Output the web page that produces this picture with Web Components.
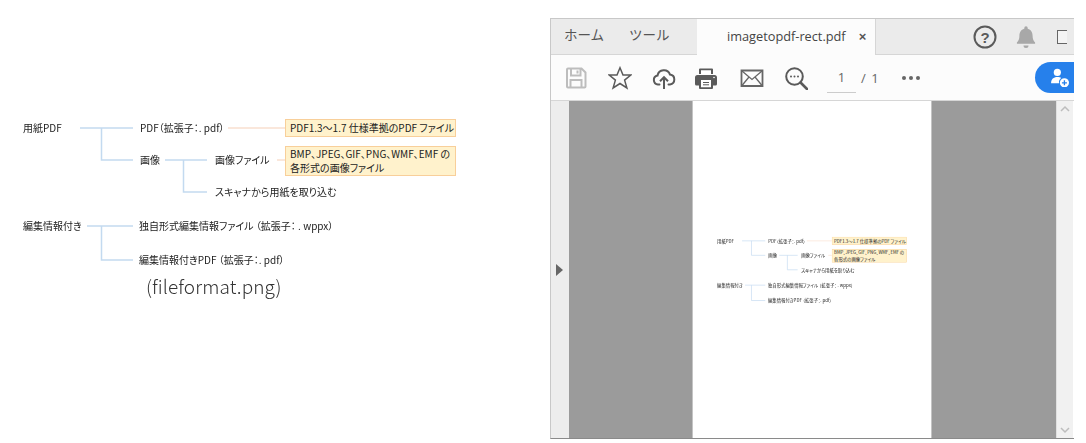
<!DOCTYPE html>
<html lang="ja">
<head>
<meta charset="utf-8">
<title>fileformat</title>
<style>
  html, body { margin: 0; background: #fff; }
  body { width: 1086px; height: 443px; overflow: hidden; font-family: "Noto Sans CJK JP", "Noto Sans", sans-serif; }
  .page { display: flex; align-items: flex-start; }
</style>
</head>
<body>
<div class="page">
  <format-diagram caption="(fileformat.png)"></format-diagram>
  <pdf-viewer>
    <format-diagram slot="page" class="thumb" thumb></format-diagram>
  </pdf-viewer>
</div>

<script>
const NODES = [
    { x: 23, y: 128, t: "用紙PDF" },
    { x: 140, y: 128, t: "PDF（拡張子：. pdf）" },
    { x: 140, y: 160, t: "画像" },
    { x: 215, y: 160, t: "画像ファイル" },
    { x: 215, y: 192, t: "スキャナから用紙を取り込む" },
    { x: 23, y: 226, t: "編集情報付き" },
    { x: 139, y: 226, t: "独自形式編集情報ファイル （拡張子： . wppx）" },
    { x: 139, y: 260, t: "編集情報付きPDF （拡張子：. pdf）" }
];

// blue = tree connectors, the pale orange ones lead to the notes
const LINES = [
    "M80 128H133", "M101.5 128V160H133",
    "M165 160H207", "M183.5 160V192H207",
    "M87 226H133", "M101.5 226V260H133"
];
const NOTE_LINES = ["M228 128H285", "M277 160H285"];

class FormatDiagram extends HTMLElement {
    constructor() {
        super();
        this.shadowDOM = this.attachShadow({ mode: "open" });
    }

    connectedCallback() {
        this.render();
    }

    render() {
        const nodes = NODES.map(n =>
            `<span class="node" style="left:${n.x}px;top:${n.y}px">${n.t}</span>`).join("");
        const caption = this.getAttribute("caption");
        this.shadowDOM.innerHTML = `
        <style>
        :host {
            display: block;
            position: relative;
            width: 550px;
            height: 320px;
            flex: none;
            font-family: "Noto Sans CJK JP", "Noto Sans", sans-serif;
            font-size: 10px;
            font-feature-settings: "palt";
            color: #222;
            filter: blur(.35px);
        }
        :host([thumb]) {
            position: absolute;
            left: 14px;
            top: 82px;
            transform-origin: 0 0;
            transform: scale(.438, .452);
            filter: blur(1.1px);
        }
        svg { position: absolute; left: 0; top: 0; }
        .node {
            position: absolute;
            transform: translateY(-50%);
            white-space: nowrap;
            line-height: 14px;
        }
        .note {
            position: absolute;
            left: 285px;
            width: 171px;
            box-sizing: border-box;
            padding: 0 0 0 4px;
            background: #fff2cc;
            border: 1.500px solid #f8cf9a;
            display: flex;
            flex-direction: column;
            justify-content: center;
            line-height: 14px;
            white-space: nowrap;
        }
        .caption {
            position: absolute;
            left: 146px;
            top: 273px;
            font-size: 19px;
            font-weight: 300;
            line-height: 26px;
            white-space: nowrap;
            color: #333;
            letter-spacing: .1px;
        }
        </style>
        <svg width="550" height="320" fill="none">
            <path stroke="#c3daf0" stroke-width="1.500" d="${LINES.join(" ")}"/>
            <path stroke="#f9e0d0" stroke-width="1.500" d="${NOTE_LINES.join(" ")}"/>
        </svg>
        ${nodes}
        <div class="note" style="top:119px;height:18px"><span>PDF1.3～1.7 仕様準拠のPDF ファイル</span></div>
        <div class="note" style="top:146px;height:30px"><span>BMP、JPEG、GIF、PNG、WMF、EMF の</span><span>各形式の画像ファイル</span></div>
        ${caption ? `<div class="caption">${caption}</div>` : ""}
        `;
    }
}
customElements.define("format-diagram", FormatDiagram);

const ICONS = {
    save: `<path fill="none" stroke="#bdbdbd" stroke-width="2" d="M3 3.5a1 1 0 0 1 1-1h13.5L21.5 6.5V20.5a1 1 0 0 1-1 1H4a1 1 0 0 1-1-1Z M7 2.5V9.5H16.5V2.5 M6.500 21.500V14H17.500V21.500"/><path stroke="#bdbdbd" stroke-width="2" d="M13.500 4.500V7.500"/>`,
    star: `<path fill="none" stroke="#5a5a5a" stroke-width="1.500" d="M12 1.800 15 9.100H22.800L16.600 14.100 18.900 22 12 17.500 5.100 22 7.400 14.100 1.200 9.100H9Z"/>`,
    upload: `<path fill="none" stroke="#5a5a5a" stroke-width="2" stroke-linecap="round" d="M7.500 18.500H6A4.500 4.500 0 0 1 5.500 9.600 6.500 6.500 0 0 1 18 8.600 5 5 0 0 1 18 18.500H16.500"/><path fill="none" stroke="#5a5a5a" stroke-width="2" d="M12 23V11.500M8 15.200 12 11.200 16 15.200"/>`,
    print: `<path fill="#5a5a5a" d="M6 2.500h12a1 1 0 0 1 1 1V8H5V3.500a1 1 0 0 1 1-1ZM3.500 9h17A2.500 2.500 0 0 1 23 11.500V18a1.500 1.500 0 0 1-1.500 1.500H19V22a1 1 0 0 1-1 1H6a1 1 0 0 1-1-1v-2.500H2.500A1.500 1.500 0 0 1 1 18v-6.500A2.500 2.500 0 0 1 3.500 9Z"/><path fill="#fff" d="M7 4.300h10V8H7ZM7 14h10v7.200H7Z"/><path stroke="#5a5a5a" d="M9 16.500h6M9 18.800h6"/><circle cx="20" cy="11.500" r=".8" fill="#fff"/>`,
    mail: `<path fill="none" stroke="#666" stroke-width="1.800" d="M1.500 4.500H22.500V20H1.500Z"/><path fill="none" stroke="#666" stroke-width="1.300" d="M2 5 12 13.500 22 5M2 19.500 9 11M22 19.500 15 11"/>`,
    search: `<circle cx="10.500" cy="10.500" r="8.300" fill="none" stroke="#5a5a5a" stroke-width="2"/><path stroke="#5a5a5a" stroke-width="2.600" stroke-linecap="round" d="M16.500 16.500 23 23"/><circle cx="7" cy="10.500" r="1" fill="#5a5a5a"/><circle cx="10.500" cy="10.500" r="1" fill="#5a5a5a"/><circle cx="14" cy="10.500" r="1" fill="#5a5a5a"/>`,
    help: `<circle cx="12" cy="12" r="10.500" fill="none" stroke="#5a5a5a" stroke-width="2"/><text x="12" y="17.500" text-anchor="middle" font-family="Liberation Sans" font-weight="700" font-size="15" fill="#5a5a5a">?</text>`,
    bell: `<path fill="#a8a8a8" d="M12 1.200a1.700 1.700 0 0 1 1.700 1.700v.8c3.500.9 4.900 3.700 4.900 7.300 0 3 .9 4.800 2.500 6.400v1.400H2.900v-1.400c1.600-1.600 2.500-3.400 2.500-6.400 0-3.600 1.400-6.400 4.900-7.300v-.8A1.700 1.700 0 0 1 12 1.200ZM9.500 20.500h5a2.500 2.500 0 0 1-5 0Z"/>`,
    share: `<circle cx="10" cy="6.500" r="4.300" fill="#fff"/><path fill="#fff" d="M2.500 19.500c0-5 3-7.500 7.500-7.500 2 0 3.500.4 4.700 1.300a6.500 6.500 0 0 0-2.700 6.200Z"/><circle cx="18.500" cy="19" r="5.500" fill="#fff"/><path stroke="#2680eb" stroke-width="1.600" d="M15.500 19h6M18.500 16v6"/>`
};

class ToolIcon extends HTMLElement {
    constructor() {
        super();
        this.shadowDOM = this.attachShadow({ mode: "open" });
    }

    connectedCallback() {
        const size = this.getAttribute("size") || 24;
        this.shadowDOM.innerHTML = `
        <style>
        :host { display: flex; align-items: center; justify-content: center; flex: none; }
        svg { display: block; }
        </style>
        <svg width="${size}" height="${size}" viewBox="0 0 24 24">${ICONS[this.getAttribute("name")]}</svg>
        `;
    }
}
customElements.define("tool-icon", ToolIcon);

class ViewerTabs extends HTMLElement {
    constructor() {
        super();
        this.shadowDOM = this.attachShadow({ mode: "open" });
        this.shadowDOM.innerHTML = `
        <style>
        :host {
            display: flex;
            height: 36px;
            flex: none;
            background: #ebebeb;
            color: #444;
            font-family: "Noto Sans CJK JP", sans-serif;
            overflow: hidden;
        }
        .nav {
            display: flex;
            align-items: center;
            width: 146px;
            flex: none;
            padding: 0 0 5px 13px;
            box-sizing: border-box;
            gap: 25px;
            font-size: 13.500px;
            font-weight: 400;
            color: #555;
            border-bottom: 1px solid #d6d6d6;
        }
        .tab {
            width: 179px;
            flex: none;
            display: flex;
            align-items: center;
            box-sizing: border-box;
            padding: 0 0 2px 30px;
            background: #fcfcfc;
            border-right: 1px solid #d6d6d6;
            font-family: "Open Sans", sans-serif;
            font-size: 12.750px;
            color: #444;
            white-space: nowrap;
        }
        .close { margin-left: 13px; font-family: "Liberation Sans", sans-serif; font-size: 13px; color: #555; font-weight: 700; }
        .right {
            flex: 1;
            display: flex;
            align-items: center;
            border-bottom: 1px solid #d6d6d6;
        }
        tool-icon.help { margin-left: 97px; }
        tool-icon.bell { margin-left: 17px; }
        .box { width: 9px; height: 12px; margin-left: 19px; border: 1.500px solid #666; border-right: 0; background: #f4f4f4; flex: none; }
        </style>
        <div class="nav"><span>ホーム</span><span>ツール</span></div>
        <div class="tab"><span>imagetopdf-rect.pdf</span><span class="close">×</span></div>
        <div class="right">
            <tool-icon class="help" name="help"></tool-icon>
            <tool-icon class="bell" name="bell"></tool-icon>
            <span class="box"></span>
        </div>
        `;
    }
}
customElements.define("viewer-tabs", ViewerTabs);

class ViewerToolbar extends HTMLElement {
    constructor() {
        super();
        this.shadowDOM = this.attachShadow({ mode: "open" });
        this.shadowDOM.innerHTML = `
        <style>
        :host {
            display: flex;
            align-items: center;
            height: 46px;
            flex: none;
            box-sizing: border-box;
            padding: 0 0 0 3px;
            background: #fcfcfc;
            border-bottom: 1px solid #d6d6d6;
            font-family: "Open Sans", sans-serif;
            color: #666;
            font-size: 13px;
        }
        tool-icon { width: 44px; }
        tool-icon.print { margin-left: -2px; margin-right: 2px; }
        .pageno {
            width: 29px;
            margin-left: 9px;
            height: 29px;
            line-height: 27px;
            text-align: center;
            box-sizing: border-box;
            border-bottom: 1px solid #ccc;
            margin-top: 2px;
        }
        .total { margin-left: 5px; word-spacing: 2px; white-space: nowrap; }
        .more { display: flex; gap: 3px; margin-left: 23px; }
        .more i { width: 4px; height: 4px; border-radius: 50%; background: #666; }
        .share {
            margin-left: auto;
            width: 39px;
            height: 31px;
            display: flex;
            align-items: center;
            padding-left: 14px;
            box-sizing: border-box;
            background: #2680eb;
            border-radius: 16px 0 0 16px;
            margin-bottom: 1px;
        }
        .share tool-icon { width: auto; }
        </style>
        <tool-icon name="save"></tool-icon>
        <tool-icon name="star"></tool-icon>
        <tool-icon name="upload"></tool-icon>
        <tool-icon class="print" name="print"></tool-icon>
        <tool-icon name="mail"></tool-icon>
        <tool-icon name="search"></tool-icon>
        <span class="pageno">1</span>
        <span class="total">/ 1</span>
        <span class="more"><i></i><i></i><i></i></span>
        <span class="share"><tool-icon name="share" size="20"></tool-icon></span>
        `;
    }
}
customElements.define("viewer-toolbar", ViewerToolbar);

class PdfViewer extends HTMLElement {
    constructor() {
        super();
        this.shadowDOM = this.attachShadow({ mode: "open" });
        this.shadowDOM.innerHTML = `
        <style>
        :host {
            display: flex;
            flex-direction: column;
            width: 524px;
            height: 421px;
            margin-top: 18px;
            flex: none;
            box-sizing: border-box;
            border: 1px solid #c8c8c8;
            border-bottom-color: #8a8a8a;
            border-right: 0;
            overflow: hidden;
        }
        .body { flex: 1; display: flex; min-height: 0; }
        .rail {
            width: 18px;
            flex: none;
            background: #ededed;
            display: flex;
            align-items: center;
            justify-content: center;
            box-sizing: border-box;
        }
        .rail i { border-left: 7px solid #666; border-top: 6px solid transparent; border-bottom: 6px solid transparent; margin-left: -2px; }
        .stage {
            width: 487px;
            flex: none;
            background: #9b9b9b;
            display: flex;
            justify-content: center;
        }
        .sheet {
            position: relative;
            width: 238px;
            margin-right: 1px;
            background: #fff;
            border: solid #c4c4c4;
            border-width: 0 1px;
            overflow: hidden;
        }
        .scroll {
            width: 17px;
            flex: none;
            background: #f1f1f1;
            display: flex;
            flex-direction: column;
            justify-content: space-between;
            align-items: center;
            padding: 4px 0;
            box-sizing: border-box;
            border-left: 1px solid #e0e0e0;
        }
        .scroll svg { display: block; }
        </style>
        <viewer-tabs></viewer-tabs>
        <viewer-toolbar></viewer-toolbar>
        <div class="body">
            <div class="rail"><i></i></div>
            <div class="stage"><div class="sheet"><slot name="page"></slot></div></div>
            <div class="scroll">
                <svg width="10" height="7" fill="none" stroke="#bdbdbd" stroke-width="1.500"><path d="M1 6 5 2 9 6"/></svg>
                <svg width="10" height="7" fill="none" stroke="#bdbdbd" stroke-width="1.500"><path d="M1 1 5 5 9 1"/></svg>
            </div>
        </div>
        `;
    }
}
customElements.define("pdf-viewer", PdfViewer);
</script>
</body>
</html>
